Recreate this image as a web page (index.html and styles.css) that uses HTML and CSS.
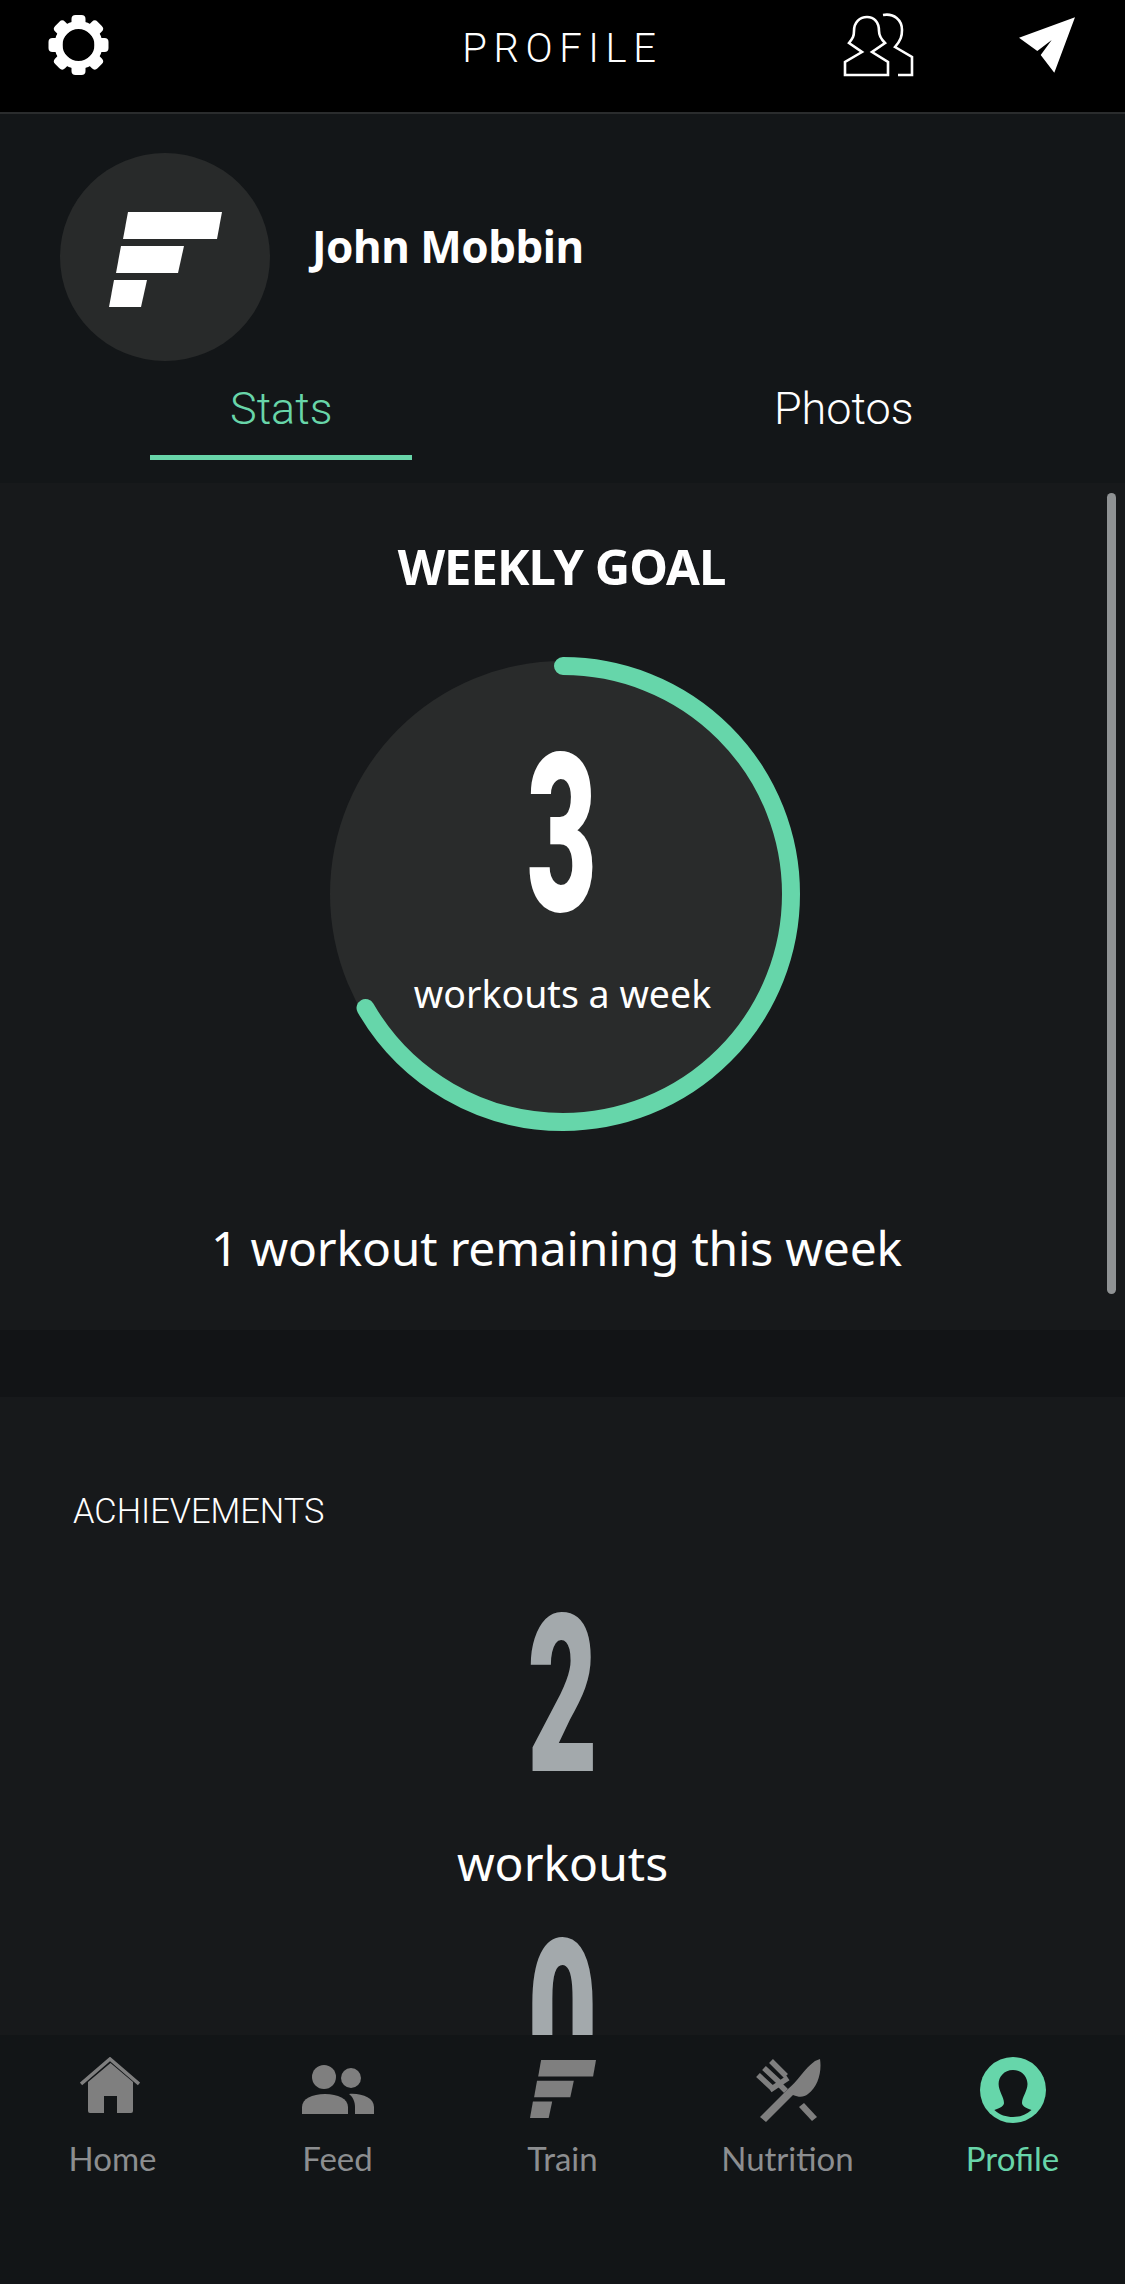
FILE: index.html

```html
<!DOCTYPE html>
<html lang="en">
<head>
  <meta charset="UTF-8" />
  <meta name="viewport" content="width=device-width, initial-scale=1.0"/>
  <title>Profile</title>
  <link rel="stylesheet" href="styles.css">
</head>
<body>
  <svg class="defs" width="0" height="0">
    <symbol id="f-logo" viewBox="48 57 113 95" preserveAspectRatio="none">
      <polygon points="67,57 161,57 156,84 62,84"/>
      <polygon points="60,91 123,91 117,118 55,118"/>
      <polygon points="53,125 86,125 80,152 48,152"/>
    </symbol>
    <rect id="gear-tooth" x="23.5" y="0" width="14" height="14" rx="4"/>
  </svg>

  <header class="top-bar">
    <div class="top-left">
      <svg class="icon-gear" width="61" height="60" viewBox="0 0 61 60" fill="#fff">
        <use href="#gear-tooth"/>
        <use href="#gear-tooth" transform="rotate(45 30.5 30)"/>
        <use href="#gear-tooth" transform="rotate(90 30.5 30)"/>
        <use href="#gear-tooth" transform="rotate(135 30.5 30)"/>
        <use href="#gear-tooth" transform="rotate(180 30.5 30)"/>
        <use href="#gear-tooth" transform="rotate(225 30.5 30)"/>
        <use href="#gear-tooth" transform="rotate(270 30.5 30)"/>
        <use href="#gear-tooth" transform="rotate(315 30.5 30)"/>
        <circle cx="30.5" cy="30" r="20" fill="none" stroke="#fff" stroke-width="8"/>
      </svg>
    </div>
    <div class="top-title">PROFILE</div>
    <div class="top-right">
      <svg class="icon-friends" width="71" height="65" viewBox="13 13 71 65" fill="none" stroke="#fff" stroke-width="2.6">
        <path d="M15 75V62L32 52L19 43C23 38 24 36 24 31C24 22 30 17 37 17C44 17 49 22 49 31C49 36 51 39 55 43L42 52L58 62V75Z"/>
        <path d="M53 15C64 13 72 20 72 30C72 36 71 40 65 47L82 57V75H68"/>
      </svg>
      <svg class="icon-send" width="58" height="58" viewBox="18 16 58 58" fill="#fff">
        <polygon points="75,17.3 19,37.7 37.3,51 51.7,40 40.7,55 54.3,72.7"/>
      </svg>
    </div>
  </header>

  <section class="profile-head">
    <div class="user-row">
      <div class="avatar">
        <svg class="avatar-logo" width="113" height="95" fill="#fff"><use href="#f-logo"/></svg>
      </div>
      <div class="user-name">John Mobbin</div>
    </div>
    <div class="tabs">
      <div class="tab tab-active">Stats</div>
      <div class="tab">Photos</div>
    </div>
  </section>

  <section class="panel goal-panel">
    <h2 class="goal-title">WEEKLY GOAL</h2>
    <div class="ring">
      <svg class="ring-svg" width="474" height="474" viewBox="0 0 474 474">
        <circle cx="237" cy="237" r="233" fill="#292b2b"/>
        <circle cx="237" cy="237" r="228" fill="none" stroke="#66d6aa" stroke-width="18" stroke-linecap="round" pathLength="360" stroke-dasharray="240 360" transform="rotate(-90 237 237)"/>
      </svg>
      <div class="big-num goal-num">3</div>
      <div class="ring-label">workouts a week</div>
    </div>
    <p class="goal-left">1 workout remaining this week</p>
    <div class="scroll-thumb"></div>
  </section>

  <section class="panel achieve-panel">
    <h3 class="achieve-title">ACHIEVEMENTS</h3>
    <div class="big-num achieve-num">2</div>
    <div class="achieve-label">workouts</div>
    <div class="big-num achieve-num achieve-next">0</div>
  </section>

  <nav class="tab-bar">
    <div class="nav-item">
      <svg class="nav-home" width="60" height="56" viewBox="0 0 60 56" fill="#7f7f7f">
        <path d="M8 25L30.5 6L53 25V54a2 2 0 0 1-2 2H37V39H24V56H10a2 2 0 0 1-2-2Z"/>
        <path d="M1 27L30 2L59 27" fill="none" stroke="#7f7f7f" stroke-width="3.5"/>
      </svg>
      <span class="nav-label">Home</span>
    </div>
    <div class="nav-item">
      <svg class="nav-feed" width="72" height="49" viewBox="0 0 72 49" fill="#7f7f7f">
        <circle cx="22" cy="12" r="12"/>
        <circle cx="49" cy="13" r="10"/>
        <path d="M0 49V42C0 34 10 29 23 29C36 29 46 34 46 42V49Z"/>
        <path d="M47 29C60 28 72 33 72 42V49H53V42C53 37 51 32 47 29Z"/>
      </svg>
      <span class="nav-label">Feed</span>
    </div>
    <div class="nav-item">
      <svg class="nav-train" width="66" height="58" fill="#7f7f7f"><use href="#f-logo"/></svg>
      <span class="nav-label">Train</span>
    </div>
    <div class="nav-item">
      <svg class="nav-food" width="66" height="64" viewBox="0 0 66 64" fill="#7f7f7f">
        <path d="M65 1C67 14 63 29 53 36C49 39 45 40 38 37L11 64L5 59L33 31C42 24 50 10 60 3Z"/>
        <polygon points="49,45 62,59 57,63 44,49"/>
        <path d="M3 17L17 30M9 10L24 24M16 3L31 18M15 32L33 20M24 26L31 33" fill="none" stroke="#7f7f7f" stroke-width="5.5"/>
      </svg>
      <span class="nav-label">Nutrition</span>
    </div>
    <div class="nav-item nav-active">
      <svg width="66" height="66" viewBox="0 0 66 66">
        <circle cx="33" cy="33" r="33" fill="#66d6aa"/>
        <path fill="#121517" d="M33 13C24 13 18.6 20 18.6 27C18.6 34 24 40 24 46C24 49 20 51 14.3 53C20 58 26 60 33 60C40 60 46 58 51.5 53C46 51 42 49 42 46C42 40 47.5 34 47.5 27C47.5 20 42 13 33 13Z"/>
      </svg>
      <span class="nav-label">Profile</span>
    </div>
  </nav>
</body>
</html>
```

FILE: styles.css

```css
body {
  margin: 0;
  width: 1125px;
  height: 2284px;
  overflow: hidden;
  display: flex;
  flex-direction: column;
  background-color: #121416;
  color: white;
  font-family: "Noto Sans", sans-serif;
}
.defs {
  display: block;
  height: 0;
}
.top-bar {
  height: 112px;
  flex: none;
  display: grid;
  grid-template-columns: 1fr auto 1fr;
  background-color: black;
  border-bottom: 2px solid #2a2c2d;
}
.top-left {
  padding: 15px 0 0 48px;
}
.top-title {
  margin-top: 24px;
  font-family: Roboto, sans-serif;
  font-weight: 300;
  font-size: 40px;
  line-height: 50px;
  letter-spacing: 6.6px;
}
.top-right {
  display: flex;
  justify-content: flex-end;
  align-items: flex-start;
  gap: 104px;
  padding: 13px 49px 0 0;
}
.icon-send {
  margin-top: 3px;
}
.profile-head {
  height: 369px;
  flex: none;
  background-color: #131618;
}
.user-row {
  display: flex;
  align-items: center;
  padding: 39px 0 0 60px;
}
.avatar {
  width: 210px;
  height: 208px;
  border-radius: 50%;
  background-color: #282a2a;
  display: flex;
  align-items: center;
  justify-content: center;
}
.avatar-logo {
  margin: 5px 0 0 0;
}
.user-name {
  margin: 0 0 22px 42px;
  font-size: 44px;
  font-weight: 700;
  letter-spacing: -0.5px;
}
.tabs {
  display: grid;
  grid-template-columns: 1fr 1fr;
  justify-items: center;
  margin-top: 20px;
}
.tab {
  width: 262px;
  height: 79px;
  box-sizing: border-box;
  text-align: center;
  font-family: Roboto, sans-serif;
  font-weight: 300;
  font-size: 45px;
  line-height: 56px;
}
.tab-active {
  color: #68d5a9;
  border-bottom: 5px solid #68d5a9;
}
.panel {
  background-color: #17191b;
  flex: none;
}
.goal-panel {
  position: relative;
  height: 847px;
  display: flex;
  flex-direction: column;
  align-items: center;
}
.goal-title {
  margin: 53px 2px 0 0;
  font-size: 49px;
  line-height: 60px;
  font-weight: 700;
  letter-spacing: -1px;
}
.ring {
  position: relative;
  width: 474px;
  height: 474px;
  margin-top: 61px;
  display: flex;
  flex-direction: column;
  align-items: center;
}
.ring-svg {
  position: absolute;
  top: 0;
  left: 0;
}
.big-num {
  font-family: Roboto, sans-serif;
  font-weight: 900;
  font-size: 221px;
  line-height: 170px;
  transform: scaleX(0.55);
  text-align: center;
}
.goal-num {
  position: relative;
  margin-top: 94px;
}
.ring-label {
  position: relative;
  margin-top: 48px;
  font-size: 37.5px;
  line-height: 50px;
}
.goal-left {
  margin: 82px 12px 0 0;
  font-size: 48px;
  line-height: 70px;
  letter-spacing: -0.2px;
}
.scroll-thumb {
  position: absolute;
  top: 10px;
  right: 9px;
  width: 9px;
  height: 801px;
  border-radius: 5px;
  background-color: #8f9294;
}
.achieve-panel {
  margin-top: 67px;
  height: 638px;
  overflow: hidden;
  text-align: center;
}
.achieve-title {
  margin: 94px 0 0 73px;
  text-align: left;
  font-family: Roboto, sans-serif;
  font-weight: 300;
  font-size: 34.4px;
  line-height: 40px;
}
.achieve-num {
  color: #a3a9ac;
  margin-top: 80px;
}
.achieve-label {
  margin-top: 47px;
  font-size: 48px;
  line-height: 70px;
}
.achieve-next {
  margin-top: 39px;
}
.tab-bar {
  flex: 1;
  display: grid;
  grid-template-columns: repeat(5, 1fr);
  padding-top: 22px;
  align-items: start;
  background-color: #121517;
}
.nav-item {
  display: flex;
  flex-direction: column;
  align-items: center;
  height: 120px;
  position: relative;
  color: #8c8e90;
}
.nav-item svg {
  display: block;
  flex: none;
}
.nav-label {
  position: absolute;
  top: 81px;
  font-family: Lato, sans-serif;
  font-size: 33px;
  line-height: 40px;
}
.nav-active {
  color: #68d5a9;
}
.nav-home {
  margin-right: 5px;
}
.nav-feed {
  margin-top: 8px;
}
.nav-train {
  margin-top: 3px;
}
.nav-food {
  margin-top: 1px;
}
```
